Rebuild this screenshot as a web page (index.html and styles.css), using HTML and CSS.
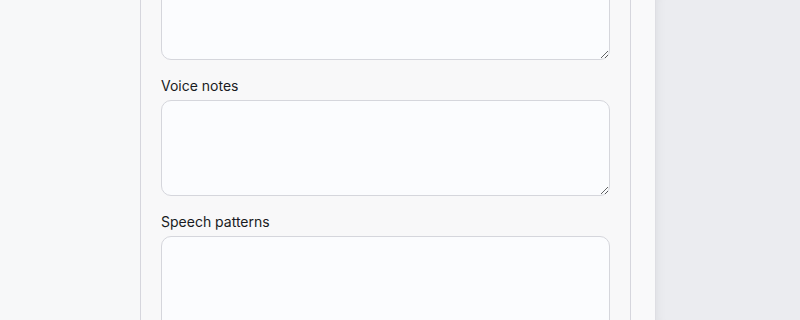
FILE: index.html
```html
<!DOCTYPE html>
<html lang="en">
<head>
  <meta charset="UTF-8">
  <meta name="viewport" content="width=device-width, initial-scale=1.0">
  <title>Character notes</title>
  <link rel="stylesheet" href="styles.css">
</head>
<body>
  <div class="page">
    <div class="side"></div>
    <div class="sheet">
      <div class="panel">
        <form class="fields">
          <label class="field">
            <textarea class="input"></textarea>
          </label>

          <label class="field">
            <span class="label">Voice notes</span>
            <textarea class="input"></textarea>
          </label>

          <label class="field">
            <span class="label">Speech patterns</span>
            <textarea class="input"></textarea>
          </label>
        </form>
      </div>
      <div class="gutter"></div>
    </div>
    <div class="backdrop"></div>
  </div>
</body>
</html>
```

FILE: styles.css
```css
html, body {
  margin: 0;
  height: 100%;
}

body {
  background: #f7f8f9;
  font-family: Inter, "Noto Sans", sans-serif;
  color: #181b22;
  overflow: hidden;
}

.page {
  display: flex;
  height: 320px;
}

.side {
  width: 140px;
  flex-shrink: 0;
}

.sheet {
  display: flex;
  width: 515px;
  flex-shrink: 0;
}

.panel {
  width: 491px;
  border-left: 1px solid #d6d6dd;
  border-right: 1px solid #d6d6dd;
  background: #f8f8f9;
  padding: 0 20px;
  box-sizing: border-box;
  overflow: hidden;
}

.gutter {
  width: 24px;
  background: #f9f9fa;
}

.backdrop {
  flex: 1;
  background: #ebecf0;
  border-left: 1px solid #dedee3;
  box-shadow: inset 10px 0 10px -8px rgba(0, 0, 0, 0.05);
}

.fields {
  display: flex;
  flex-direction: column;
  gap: 16px;
  margin-top: -36px;
}

.field {
  display: flex;
  flex-direction: column;
}

.label {
  font-size: 14px;
  line-height: 20px;
  font-weight: 400;
  margin-bottom: 4px;
}

.input {
  display: block;
  height: 96px;
  box-sizing: border-box;
  border: 1px solid #d5d6dc;
  border-radius: 10px;
  background: #fbfcfe;
  resize: vertical;
  margin: 0;
  padding: 8px 12px;
  font: inherit;
}
```
